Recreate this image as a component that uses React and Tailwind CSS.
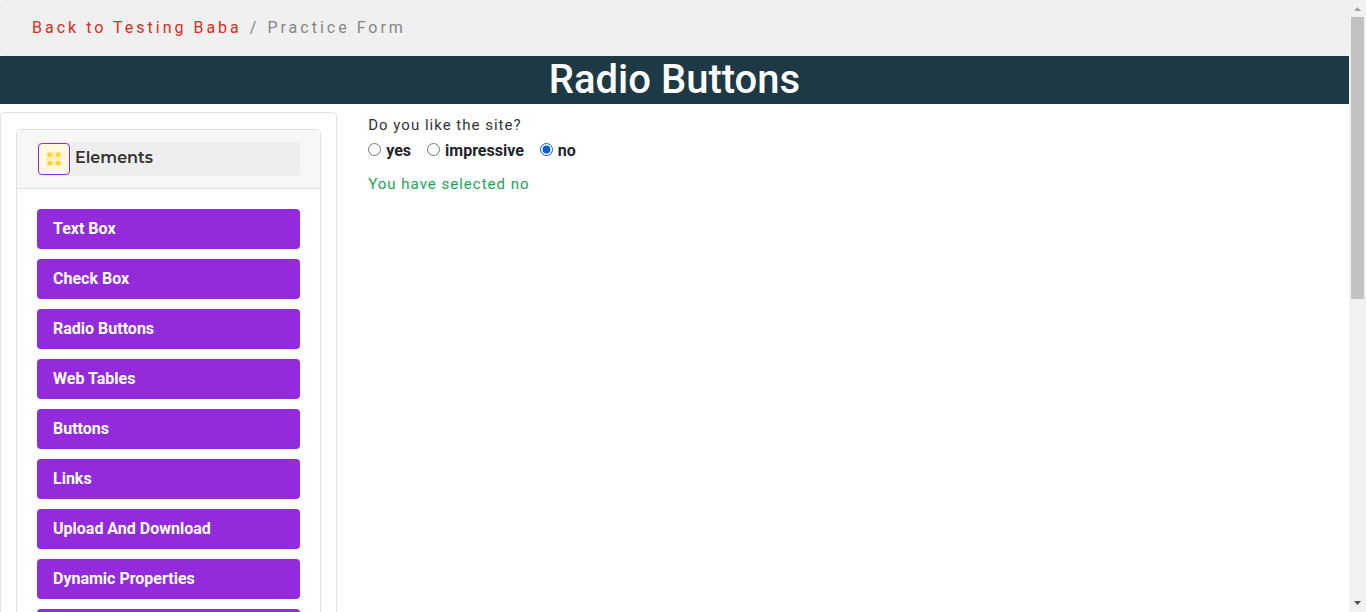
import { useState } from "react";

const links = [
  "Text Box",
  "Check Box",
  "Radio Buttons",
  "Web Tables",
  "Buttons",
  "Links",
  "Upload And Download",
  "Dynamic Properties",
];

const options = ["yes", "impressive", "no"];

function GridIcon() {
  return (
    <svg width="16" height="16" viewBox="0 0 16 16" aria-hidden="true">
      <path d="M8 0V16M0 8H16" stroke="#ffeeb0" strokeWidth="1.8" />
      <g fill="#ffd43b">
        <rect x="1.3" y="1.4" width="5" height="4.8" rx="1.4" />
        <rect x="9.7" y="1.4" width="5" height="4.8" rx="1.4" />
        <rect x="1.3" y="9.8" width="5" height="4.8" rx="1.4" />
        <rect x="9.7" y="9.8" width="5" height="4.8" rx="1.4" />
      </g>
    </svg>
  );
}

function Sidebar() {
  return (
    <aside className="w-1/4 shrink-0 rounded border border-[#dee2e6] px-[15px] py-4">
      <div className="rounded border border-[#dfdfdf]">
        <div className="border-b border-[#dfdfdf] bg-[#f7f7f7] px-5 py-3">
          <h2 className="flex gap-[5px] rounded bg-[#eeeeee] p-px">
            <span className="flex size-8 items-center justify-center rounded border border-[#932bdc] bg-[#fff9e0]">
              <GridIcon />
            </span>
            <span className="font-[Montserrat,Inter,sans-serif] text-base leading-[30px] font-semibold text-[#333333]">
              Elements
            </span>
          </h2>
        </div>
        <nav className="flex flex-col gap-2.5 p-5">
          {links.map((name) => (
            <a
              key={name}
              href="#"
              className="h-10 rounded bg-[#932bdc] px-4 py-2 text-base leading-6 font-bold text-white"
            >
              {name}
            </a>
          ))}
          <div className="h-10 rounded bg-[#932bdc]" />
        </nav>
      </div>
    </aside>
  );
}

function Question() {
  const [choice, setChoice] = useState("no");
  return (
    <section className="min-w-0 grow pt-px pl-[31px]">
      <fieldset>
        <legend className="text-[15px] leading-6 tracking-[1px] text-[#333333]">
          Do you like the site?
        </legend>
        <div className="flex gap-4 pt-0.5">
          {options.map((name) => (
            <label
              key={name}
              className="flex gap-[5px] text-base leading-6 font-bold text-[#212529]"
            >
              <input
                type="radio"
                name="like"
                className="mt-1 size-[13px] accent-[#0b5ed0]"
                checked={choice === name}
                onChange={() => setChoice(name)}
              />
              {name}
            </label>
          ))}
        </div>
      </fieldset>
      <p className="pt-[9px] text-[15px] leading-6 tracking-[1px] text-[#16a653]">
        You have selected {choice}
      </p>
    </section>
  );
}

function ScrollTrack() {
  return (
    <div aria-hidden="true" className="flex w-[17px] shrink-0 flex-col items-center bg-[#f1f1f1]">
      <svg className="shrink-0" width="17" height="17" viewBox="0 0 17 17">
        <path d="M5 11L8.5 7L12 11Z" fill="#a3a3a3" />
      </svg>
      <div className="h-[46%] w-[13px] bg-[#c1c1c1]" />
      <svg className="mt-auto shrink-0" width="17" height="17" viewBox="0 0 17 17">
        <path d="M5 6L8.5 10L12 6Z" fill="#505050" />
      </svg>
    </div>
  );
}

export default function App() {
  return (
    <div className="flex h-screen overflow-hidden bg-white font-[Roboto,sans-serif]">
      <main className="min-w-0 grow overflow-hidden">
        <nav className="flex gap-2 rounded bg-[#f0f0f0] px-8 py-4 text-base leading-6 tracking-[3px] text-[#868686]">
          <a href="#" className="text-[#dc2b1b]">
            Back to Testing Baba
          </a>
          <span>/</span>
          <span>Practice Form</span>
        </nav>
        <h1 className="bg-[#1c3945] text-center text-[40px] leading-12 font-medium text-white">
          Radio Buttons
        </h1>
        <div className="flex items-start pt-2">
          <Sidebar />
          <Question />
        </div>
      </main>
      <ScrollTrack />
    </div>
  );
}
